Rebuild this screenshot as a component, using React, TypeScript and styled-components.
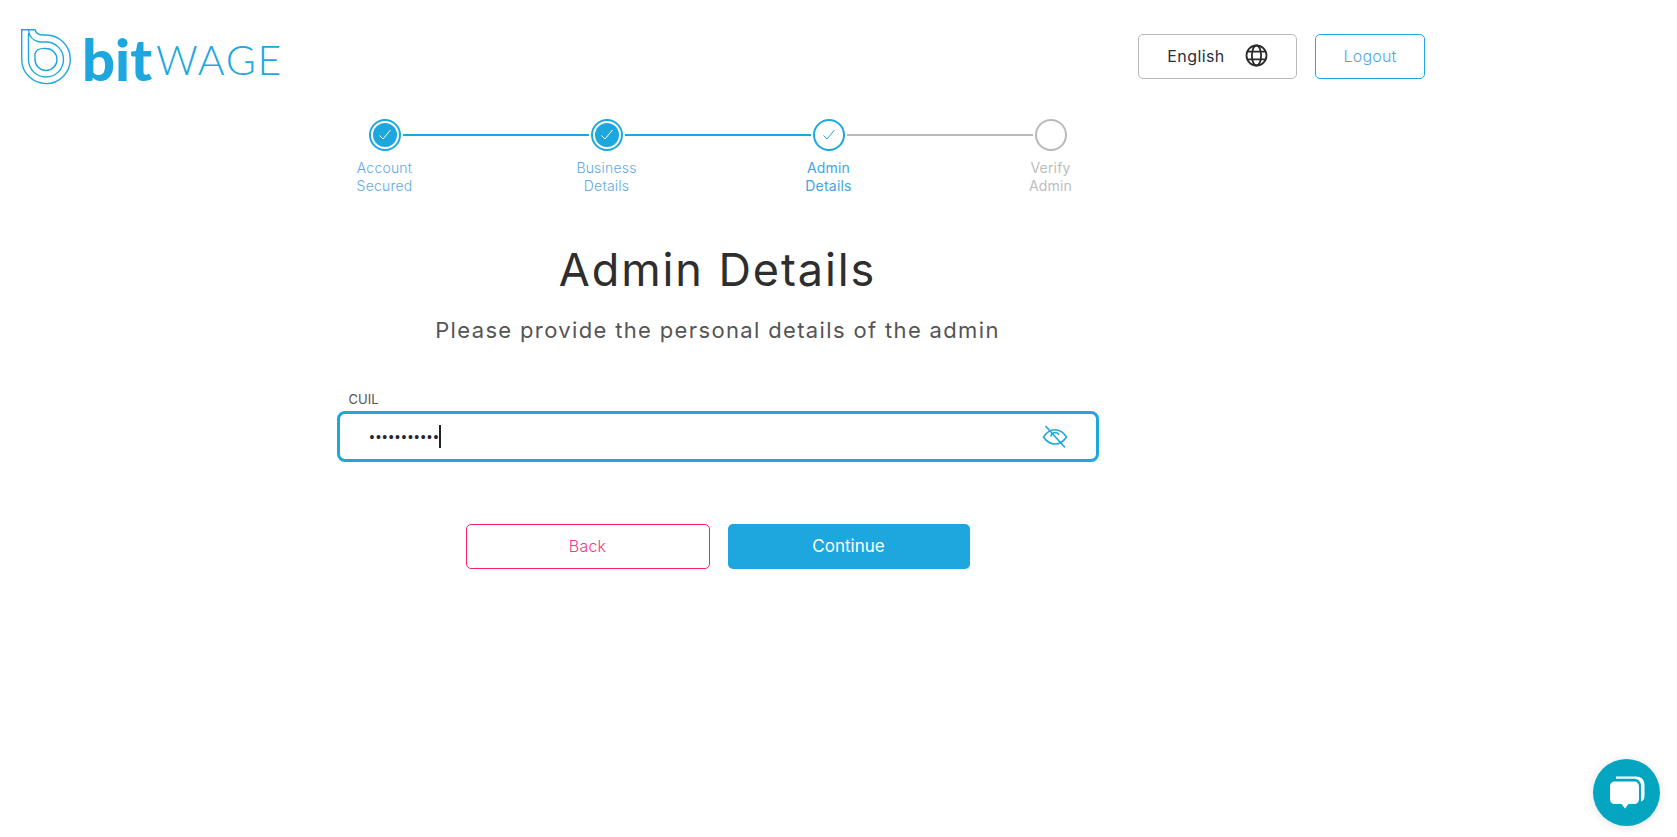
import React from 'react'
import styled, { createGlobalStyle } from 'styled-components'

const GlobalStyle = createGlobalStyle`
  html, body {
    margin: 0;
    padding: 0;
    background: #ffffff;
    font-family: 'Inter', 'Noto Sans', sans-serif;
  }
`

const blue = '#1ea7df'
const grey = '#b9b9b9'

const Page = styled.div`
  width: 1435px;
  height: 837px;
  overflow: hidden;
`

const Header = styled.header`
  display: flex;
  align-items: center;
  justify-content: space-between;
  padding: 28px 10px 0 21px;
  height: 57px;
`

const LogoWrap = styled.div`
  display: flex;
  align-items: flex-end;
  height: 56px;
`

const LogoBit = styled.span`
  font-family: 'Lato', sans-serif;
  font-weight: 900;
  font-size: 58px;
  line-height: 52px;
  color: ${blue};
  margin-left: 11px;
`

const LogoWage = styled.span`
  font-family: 'Lato', sans-serif;
  font-weight: 300;
  font-size: 41px;
  line-height: 50px;
  color: ${blue};
  margin-left: 4px;
  letter-spacing: 1.6px;
`

const HeaderActions = styled.div`
  display: flex;
  gap: 18px;
`

const LangButton = styled.button`
  display: flex;
  align-items: center;
  justify-content: center;
  gap: 20px;
  width: 159px;
  height: 45px;
  padding: 0 0 2px;
  background: #fff;
  border: 1px solid ${grey};
  border-radius: 5px;
  font: 400 16px 'Inter', sans-serif;
  letter-spacing: 0.4px;
  color: #2d2d3d;
`

const LogoutButton = styled.button`
  width: 110px;
  height: 45px;
  padding: 0 0 2px;
  background: #fff;
  border: 1px solid ${blue};
  border-radius: 5px;
  font: 300 16px 'Inter', sans-serif;
  letter-spacing: 0.2px;
  color: #4fa8e4;
`

const Main = styled.main`
  display: flex;
  flex-direction: column;
  align-items: center;
`

const StepTrack = styled.div`
  display: flex;
  align-items: center;
  width: 698px;
  margin-top: 34px;
`

const StepCircle = styled.div<{ $state: 'done' | 'current' | 'todo' }>`
  box-sizing: border-box;
  flex: none;
  display: flex;
  width: 32px;
  height: 32px;
  padding: 2px;
  border-radius: 50%;
  border: 2px solid ${p => (p.$state === 'todo' ? grey : blue)};
  background: #fff;
`

const StepInner = styled.div<{ $filled: boolean }>`
  flex: 1;
  display: flex;
  align-items: center;
  justify-content: center;
  border-radius: 50%;
  background: ${p => (p.$filled ? blue : 'transparent')};
  color: ${p => (p.$filled ? '#fff' : blue)};
`

const StepLine = styled.div<{ $active: boolean }>`
  flex: 1;
  height: 2px;
  margin: 0 2px;
  background: ${p => (p.$active ? blue : grey)};
`

const StepLabels = styled.div`
  display: grid;
  grid-template-columns: repeat(4, 222px);
  margin-top: 8px;
`

const StepLabel = styled.div<{ $state: 'done' | 'current' | 'todo' }>`
  text-align: center;
  font-size: 14px;
  line-height: 18px;
  letter-spacing: 0.2px;
  font-weight: ${p => (p.$state === 'done' ? 300 : 400)};
  color: ${p => (p.$state === 'todo' ? '#bdbdbd' : p.$state === 'done' ? '#5fa9e6' : '#3fa6e4')};
`

const Title = styled.h1`
  margin: 45px 0 0;
  font-size: 45px;
  line-height: 60px;
  font-weight: 400;
  letter-spacing: 1.9px;
  color: #2e2e2e;
`

const Subtitle = styled.p`
  margin: 14px 0 0;
  font-size: 22px;
  line-height: 32px;
  font-weight: 400;
  letter-spacing: 1.35px;
  color: #555555;
`

const FieldBlock = styled.div`
  width: 762px;
  margin-top: 45px;
`

const FieldLabel = styled.label`
  display: block;
  padding-left: 12px;
  margin-bottom: 4px;
  font-size: 13px;
  line-height: 16px;
  color: #55524f;
`

const InputBox = styled.div`
  box-sizing: border-box;
  display: flex;
  align-items: center;
  justify-content: space-between;
  height: 51px;
  padding: 0 28px 0 30px;
  border: 3px solid ${blue};
  border-radius: 8px;
  color: ${blue};
`

const MaskedValue = styled.div`
  display: flex;
  align-items: center;
`

const Dots = styled.span`
  font-family: 'Liberation Sans', sans-serif;
  font-size: 14px;
  letter-spacing: 1.5px;
  color: #23233a;
`

const Caret = styled.span`
  width: 2px;
  height: 23px;
  margin-left: -1px;
  background: #222;
`

const ButtonRow = styled.div`
  display: flex;
  gap: 18px;
  margin-top: 62px;
`

const BackButton = styled.button`
  width: 244px;
  height: 45px;
  padding: 0 0 2px;
  background: #fff;
  border: 1px solid #f5216e;
  border-radius: 5px;
  font: 300 16px 'Inter', sans-serif;
  letter-spacing: 0.2px;
  color: #f5387f;
`

const ContinueButton = styled.button`
  width: 242px;
  height: 45px;
  padding: 0 0 2px;
  background: ${blue};
  border: none;
  border-radius: 5px;
  font: 400 17px 'Inter', sans-serif;
  color: #fff;
`

const ChatLauncher = styled.div`
  position: fixed;
  right: 17px;
  bottom: 11px;
  display: flex;
  align-items: center;
  justify-content: center;
  width: 67px;
  height: 67px;
  border-radius: 50%;
  background: #03a5c1;
  box-shadow: 0 1px 8px rgba(0, 0, 0, 0.12);
`

const Check = () => (
  <svg width="16" height="16" viewBox="0 0 16 16" fill="none" stroke="currentColor" strokeWidth="1">
    <path d="M2.5 8.5 L6 12 L13.5 3" />
  </svg>
)

const LogoMark = () => (
  <svg width="50" height="56" viewBox="0 0 50 56" fill="none" stroke={blue} strokeWidth="1.4">
    <path d="M.7 .7 H14 C15 4 18 6 22 6 H25 A24.3 24.3 0 1 1 .7 30.5 Z" />
    <path d="M7.5 1 C8 7 12 12 19 13 H25 A17.5 17.5 0 1 1 7.5 30.5 V4" />
    <path d="M14 25 C15 21 19 19 25 19.5 A11 11 0 1 1 14 30.5 Z" />
  </svg>
)

const GlobeIcon = () => (
  <svg width="23" height="23" viewBox="0 0 23 23" fill="none" stroke="#2a2a2a" strokeWidth="1.8">
    <circle cx="11.5" cy="11.5" r="10" />
    <ellipse cx="11.5" cy="11.5" rx="4.6" ry="10" />
    <path d="M2.4 7.6 H20.6 M2.4 15.4 H20.6" />
  </svg>
)

const EyeOffIcon = () => (
  <svg width="26" height="24" viewBox="0 0 26 24" fill="none" stroke="currentColor" strokeWidth="1.6">
    <path d="M1.5 12 C5 6.5 9 4.8 13 4.8 C17 4.8 21 6.5 24.5 12 C21 17.2 17 19 13 19 C9 19 5 17.2 1.5 12 Z" />
    <path d="M8.8 11.5 A4.4 4.4 0 0 1 17 9.8" />
    <path d="M3.5 1 L23 22.5" />
  </svg>
)

const ChatIcon = () => (
  <svg width="36" height="33" viewBox="0 0 36 33">
    <path d="M7 0.5 H27 C32 .5 35.5 3.5 35.5 9 V20 C35.5 23 34 25 32 25.5 V10 C32 5.5 29 2.8 25 2.8 H7 Z" fill="#fff" />
    <path
      d="M6 5.5 H25 C28 5.5 30 7.5 30 10.5 V23 C30 26 28 28 25 28 H19.5 L16 32.5 L12.5 28 H6 C3 28 1 26 1 23 V10.5 C1 7.5 3 5.5 6 5.5 Z"
      fill="#fff"
    />
  </svg>
)

type StepState = 'done' | 'current' | 'todo'

const steps: { lines: [string, string]; state: StepState }[] = [
  { lines: ['Account', 'Secured'], state: 'done' },
  { lines: ['Business', 'Details'], state: 'done' },
  { lines: ['Admin', 'Details'], state: 'current' },
  { lines: ['Verify', 'Admin'], state: 'todo' },
]

const App: React.FC = () => {
  return (
    <Page>
      <GlobalStyle />
      <Header>
        <LogoWrap>
          <LogoMark />
          <LogoBit>bit</LogoBit>
          <LogoWage>WAGE</LogoWage>
        </LogoWrap>
        <HeaderActions>
          <LangButton>
            English
            <GlobeIcon />
          </LangButton>
          <LogoutButton>Logout</LogoutButton>
        </HeaderActions>
      </Header>

      <Main>
        <StepTrack>
          {steps.map((step, i) => (
            <React.Fragment key={step.lines.join(' ')}>
              {i > 0 && <StepLine $active={step.state !== 'todo'} />}
              <StepCircle $state={step.state}>
                <StepInner $filled={step.state === 'done'}>
                  {step.state !== 'todo' && <Check />}
                </StepInner>
              </StepCircle>
            </React.Fragment>
          ))}
        </StepTrack>
        <StepLabels>
          {steps.map(step => (
            <StepLabel key={step.lines.join(' ')} $state={step.state}>
              {step.lines[0]}
              <br />
              {step.lines[1]}
            </StepLabel>
          ))}
        </StepLabels>

        <Title>Admin Details</Title>
        <Subtitle>Please provide the personal details of the admin</Subtitle>

        <FieldBlock>
          <FieldLabel>CUIL</FieldLabel>
          <InputBox>
            <MaskedValue>
              <Dots>•••••••••••</Dots>
              <Caret />
            </MaskedValue>
            <EyeOffIcon />
          </InputBox>
        </FieldBlock>

        <ButtonRow>
          <BackButton>Back</BackButton>
          <ContinueButton>Continue</ContinueButton>
        </ButtonRow>
      </Main>

      <ChatLauncher>
        <ChatIcon />
      </ChatLauncher>
    </Page>
  )
}

export default App
